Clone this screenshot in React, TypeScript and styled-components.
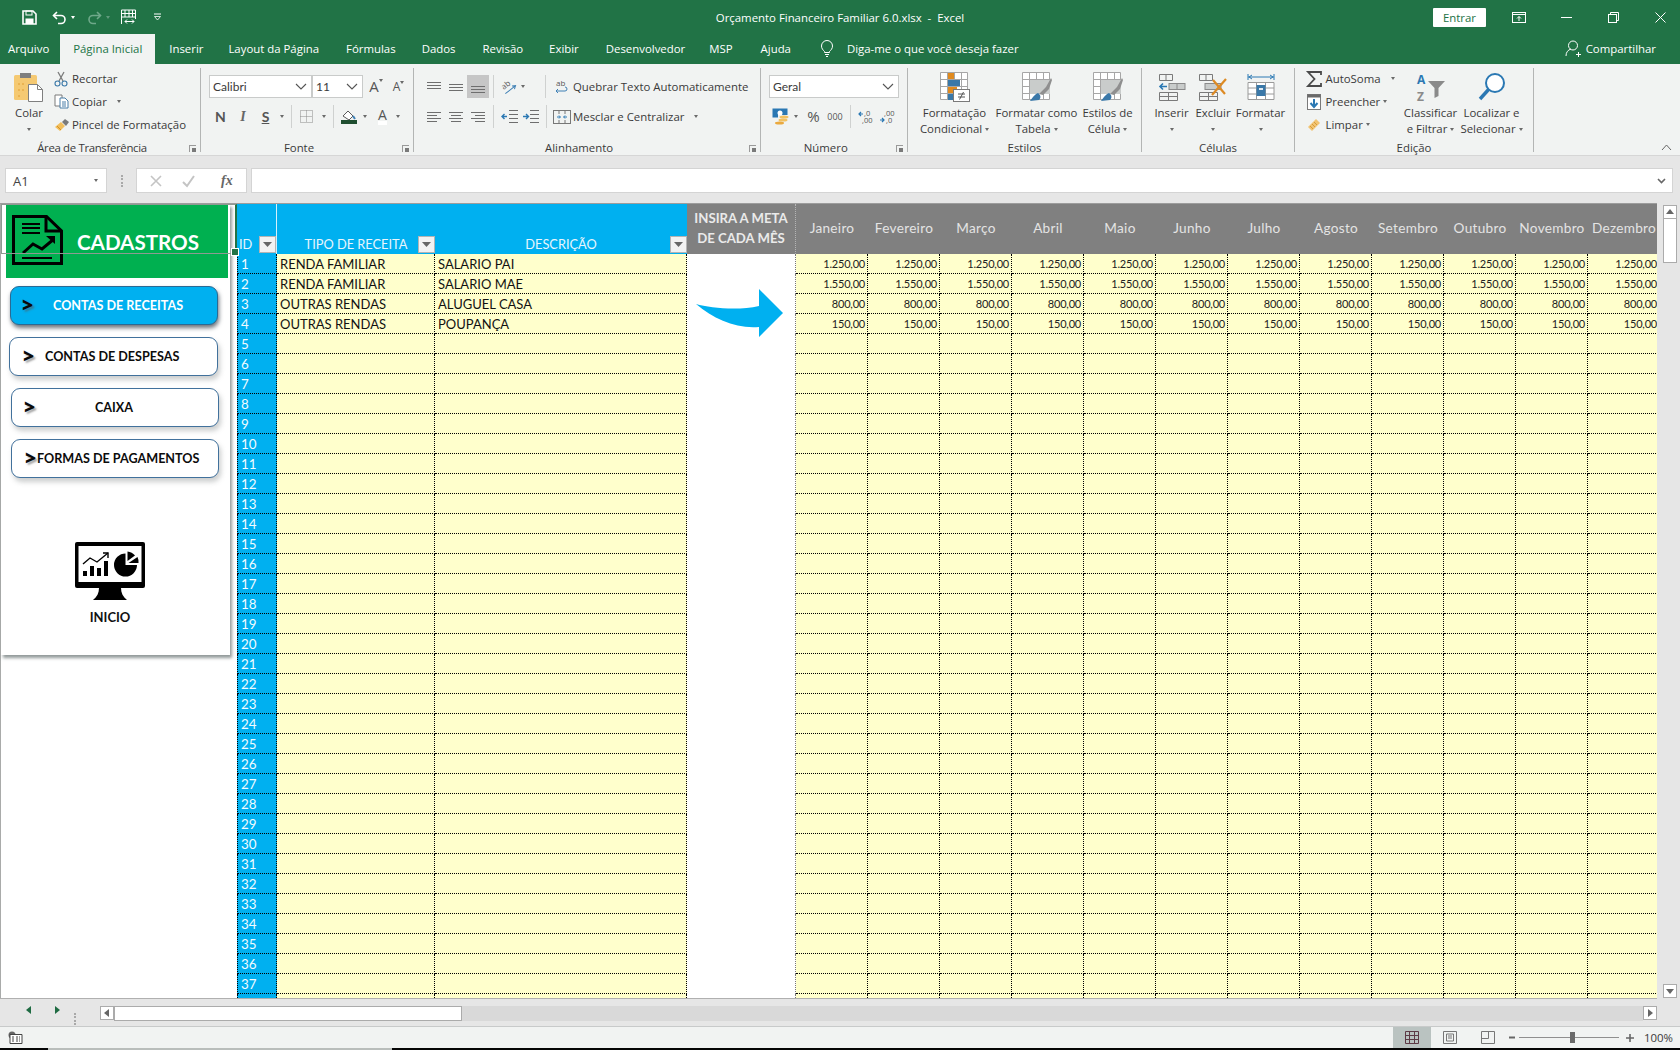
import React from "react";
import styled, { createGlobalStyle } from "styled-components";

const Global = createGlobalStyle`
  html, body { margin: 0; padding: 0; width: 1680px; height: 1050px; overflow: hidden; background: #f1f3f2; }
  #root { width: 1680px; height: 1050px; }
  * { box-sizing: border-box; }
`;

const UI = `"Open Sans", "Noto Sans", sans-serif`;
const CALC = `Lato, "Liberation Sans", sans-serif`;

const Shell = styled.div`
  width: 1680px; height: 1050px; display: flex; flex-direction: column;
  font-family: ${UI}; font-size: 11.4px; color: #3a3a3a;
`;

/* ---------- title bar ---------- */
const TitleBar = styled.header`
  height: 34px; background: #217346; color: #fff;
  display: grid; grid-template-columns: 1fr auto 1fr; align-items: center;
`;
const Qat = styled.div`display: flex; align-items: center;`;
const Slot = styled.span<{ $ml?: number; $w?: number; $sel?: boolean }>`
  display: inline-flex; align-items: center; justify-content: center; flex: none;
  margin-left: ${p => p.$ml ?? 0}px;
  ${p => (p.$w ? `width: ${p.$w}px;` : "")}
  ${p => (p.$sel ? `background: #c6c6c6; height: 23px;` : "")}
`;
const TitleText = styled.div`font-size: 11.4px; letter-spacing: 0; white-space: pre;`;
const WindowBtns = styled.div`display: flex; align-items: center; justify-content: flex-end;`;
const SignIn = styled.button`
  width: 53px; height: 19px; border: 0; border-radius: 1px; background: #fff; color: #217346;
  font: 11.4px ${UI}; padding: 0;
`;

/* ---------- tabs ---------- */
const TabBar = styled.nav`
  height: 30px; background: #217346; color: #fff; display: flex; align-items: stretch; position: relative;
`;
const Tab = styled.div<{ $ml?: number; $active?: boolean; $w?: number }>`
  display: flex; align-items: center; justify-content: center; flex: none; white-space: nowrap; padding-bottom: 2px;
  margin-left: ${p => p.$ml ?? 0}px;
  ${p => (p.$w ? `width: ${p.$w}px;` : "")}
  ${p => (p.$active ? `background: #f1f3f2; color: #217346;` : "")}
`;
const TabSpacer = styled.div`flex: 1;`;

/* ---------- ribbon ---------- */
const Ribbon = styled.section`height: 92px; background: #f1f3f2; display: flex; position: relative; border-bottom: 1px solid #d6d6d6;`;
const Group = styled.div<{ $w: number }>`
  width: ${p => p.$w}px; flex: none; position: relative; display: flex; flex-direction: column;
  &::after { content: ""; position: absolute; right: 0; top: 4px; bottom: 3px; width: 1px; background: #b3b5b4; }
`;
const GroupBody = styled.div`height: 76px; flex: none; display: flex; padding-top: 4px;`;
const GroupLabel = styled.div<{ $launch?: boolean; $tight?: boolean }>`
  height: 15px; line-height: 15px; text-align: center; white-space: nowrap; padding-right: ${p => (p.$launch ? 17 : 0)}px;
  ${p => (p.$tight ? "letter-spacing: -.33px;" : "")}
`;
const Launcher = styled.span`
  position: absolute; right: 5px; bottom: 3px; width: 7px; height: 7px;
  border-left: 1px solid #9a9a9a; border-top: 1px solid #9a9a9a;
  &::after { content: ""; position: absolute; right: 0; bottom: 0; width: 4px; height: 4px; background: #7a7a7a; }
`;
const Big = styled.div<{ $ml?: number; $w: number }>`
  display: flex; flex-direction: column; align-items: center; flex: none;
  margin-left: ${p => p.$ml ?? 0}px; width: ${p => p.$w}px; padding-top: 4px; white-space: nowrap;
`;
const BigIcon = styled.div`height: 30px; display: flex; align-items: center; justify-content: center;`;
const BigLine = styled.div`height: 16px; line-height: 16px; margin-top: 0; display: flex; align-items: center; gap: 3px;`;
const BigFirst = styled(BigLine)`margin-top: 3px;`;
const SmallCol = styled.div<{ $ml?: number; $w: number }>`
  display: flex; flex-direction: column; flex: none; margin: -1px 0 0 ${p => p.$ml ?? 0}px; width: ${p => p.$w}px;
`;
const SmallRow = styled.div`height: 23px; display: flex; align-items: center; white-space: nowrap;`;
const SmallIcon = styled.span<{ $w?: number }>`width: ${p => p.$w ?? 18}px; display: inline-flex; flex: none; align-items: center;`;
const RowStack = styled.div`display: flex; flex-direction: column; gap: 7px; padding-top: 7px;`;
const ToolRow = styled.div`height: 23px; display: flex; align-items: center; white-space: nowrap;`;
const Sep = styled.span<{ $ml: number }>`width: 1px; height: 23px; background: #cfd1d0; margin-left: ${p => p.$ml}px; flex: none;`;
const Caret = styled.span<{ $ml?: number }>`
  display: inline-block; flex: none; width: 0; height: 0; margin-left: ${p => p.$ml ?? 0}px;
  border-left: 2.5px solid transparent; border-right: 2.5px solid transparent; border-top: 3px solid #6a6a6a;
`;
const Combo = styled.div<{ $w: number; $ml?: number; $font?: string }>`
  width: ${p => p.$w}px; height: 23px; margin-left: ${p => p.$ml ?? 0}px; flex: none;
  background: #fff; border: 1px solid #c9cbca; display: flex; align-items: center; justify-content: space-between;
  padding: 0 4px 0 3px; font-family: ${p => p.$font ?? CALC}; font-size: 12px;
`;
const Bold = styled.b`font-family: ${CALC}; font-size: 14px; color: #555;`;
const Ital = styled.i`font-family: "Liberation Serif", serif; font-size: 14px; font-weight: 700; color: #666;`;
const Under = styled.b`font-family: ${CALC}; font-size: 14px; color: #555; text-decoration: underline;`;
const Glyph = styled.span<{ $s: number; $c?: string }>`font-size: ${p => p.$s}px; color: ${p => p.$c ?? "#555"}; line-height: 1;`;
const GrowBox = styled.span`display: inline-flex; align-items: flex-start;`;
const ColorA = styled.span`display: inline-flex; flex-direction: column; align-items: center; font-size: 14px; line-height: 13px; color: #555; border-bottom: 4px solid #fff;`;
const Collapse = styled.svg`position: absolute; right: 8px; bottom: 4px;`;

/* ---------- formula bar ---------- */
const FormulaBar = styled.section`
  height: 47px; background: #e6e6e6; display: flex; align-items: flex-start; padding-top: 12px;
`;
const NameBox = styled.div`
  width: 102px; height: 25px; margin-left: 5px; background: #fff; border: 1px solid #d4d4d4;
  display: flex; align-items: center; justify-content: space-between; padding: 0 8px 0 7px; font-size: 13px; color: #444;
`;
const Grip = styled.span`width: 2px; height: 12px; margin: 7px 12px 0 14px; border-left: 2px dotted #a9a9a9;`;
const FxBox = styled.div`
  width: 111px; height: 25px; margin-left: 1px; background: #fff; border: 1px solid #d4d4d4;
  display: flex; align-items: center; padding-left: 13px; gap: 20px; color: #bcbcbc;
`;
const Fx = styled.i`font-family: "Liberation Serif", serif; font-size: 14px; font-weight: 700; color: #666; margin-left: 6px;`;
const FormulaInput = styled.div`
  width: 1422px; height: 25px; margin-left: 4px; background: #fff; border: 1px solid #d4d4d4;
  display: flex; align-items: center; justify-content: flex-end; padding-right: 6px;
`;

/* ---------- sheet ---------- */
const SheetArea = styled.main`height: 796px; display: flex; background: #e6e6e6;`;
const Sheet = styled.div`
  width: 1657px; flex: none; display: flex; overflow: hidden; position: relative; background: #fff;
  border-top: 1px solid #9c9c9c; border-bottom: 1px solid #b0b0b0;
`;
const LeftCol = styled.aside`
  width: 237px; flex: none; position: relative; border-left: 1px solid #a9abaa; background: #fff;
`;
const Selection = styled.div`
  position: absolute; left: 0; top: 0; width: 236px; height: 50px; pointer-events: none;
  border-right: 2px solid #217346; border-bottom: 1px solid #8e9a92; border-left: 1px solid #8e9a92; border-top: 1px solid #8e9a92; z-index: 3;
  &::after { content: ""; position: absolute; right: -4px; bottom: -3px; width: 6px; height: 6px; background: #217346; border: 1px solid #fff; }
`;
const Panel = styled.div`
  width: 229px; height: 451px; background: #fff; box-shadow: 2px 3px 3px rgba(110,120,120,.75);
  display: flex; flex-direction: column;
`;
const PanelHead = styled.div`
  height: 74px; margin: 0 2px 0 5px; background: #00b050; display: flex; align-items: flex-start; padding: 11px 0 0 6px; position: relative;
`;
const PanelTitle = styled.div`
  font-family: ${CALC}; font-weight: 700; color: #fff; font-size: 20.6px; line-height: 30px; margin: 12px 0 0 14px;
`;
const NavList = styled.div`display: flex; flex-direction: column; gap: 12px; padding-top: 8px;`;
const NavButton = styled.div<{ $x: number; $w: number; $active?: boolean }>`
  width: ${p => p.$w}px; height: 39px; margin-left: ${p => p.$x}px; border-radius: 9px;
  border: 1px solid ${p => (p.$active ? "#2a6a94" : "#41719c")};
  background: ${p => (p.$active ? "#00b0f0" : "#fff")};
  color: ${p => (p.$active ? "#fff" : "#0c0c0c")};
  box-shadow: ${p => (p.$active ? "1px 3px 4px rgba(60,70,80,.75)" : "2px 4px 5px rgba(130,135,135,.4)")};
  display: flex; align-items: center; font-family: ${CALC}; font-weight: 700; font-size: 12.6px; white-space: nowrap;
`;
const Chevron = styled.span<{ $x: number }>`
  margin-left: ${p => p.$x}px; width: 11px; flex: none; color: #0a0a0a; font-family: ${UI}; font-weight: 800; font-size: 19px; line-height: 1;
  text-shadow: 2px 2px 2px rgba(90,90,90,.55);
`;
const NavLabel = styled.span<{ $x: number }>`margin-left: ${p => p.$x}px;`;
const Home = styled.div`display: flex; flex-direction: column; align-items: center; width: 218px; margin-top: 64px;`;
const HomeLabel = styled.div`font-family: ${CALC}; font-weight: 700; font-size: 13px; color: #111; margin-top: 9px; line-height: 16px;`;

const Grid = styled.div`flex: none; width: 1420px; overflow: hidden; position: relative;`;
const COLS = "40px 158px 252px 109px repeat(12, 72px)";
const HeadRow = styled.div`height: 50px; display: grid; grid-template-columns: ${COLS}; font-family: ${CALC}; font-size: 12.8px;`;
const BlueHead = styled.div<{ $line?: boolean; $center?: boolean }>`
  background: #00b0f0; color: #e9f6fd; position: relative; display: flex; align-items: flex-end;
  justify-content: ${p => (p.$center ? "center" : "flex-start")}; padding: 0 0 1px ${p => (p.$center ? 0 : 2)}px; line-height: 18px;
  ${p => (p.$line ? "border-right: 1px solid #d5f0fc;" : "")}
`;
const FilterBtn = styled.span`
  position: absolute; right: 0; bottom: 1px; width: 17px; height: 17px; background: #f2f2f2; border: 1px solid #b4b4b4;
  display: flex; align-items: center; justify-content: center;
`;
const GoalHead = styled.div`
  background: #808080; color: #eaeaea; font-weight: 700; font-size: 13.2px; line-height: 20px; text-align: center; padding-top: 4px; white-space: nowrap;
  border-right: 1px dotted #b5b5b5;
`;
const MonthHead = styled.div`
  background: #808080; color: #e4e4e4; font-size: 13.6px; letter-spacing: .3px; display: flex; align-items: center; justify-content: center; padding-bottom: 2px; white-space: nowrap;
`;
const Row = styled.div`height: 20px; display: grid; grid-template-columns: ${COLS}; grid-template-rows: 20px; font-family: ${CALC};`;
const IdCell = styled.div`
  height: 20px; background: #00b0f0; color: #f2fbff; font-size: 13.4px; line-height: 20px; padding-left: 3px;
  border-left: 1px dotted #000; border-right: 1px dotted #000; border-bottom: 1px dotted #000;
`;
const TextCell = styled.div`
  height: 20px; background: #ffffcc; color: #111; font-size: 13px; line-height: 20px; padding-left: 3px; white-space: nowrap;
  border-right: 1px dotted #000; border-bottom: 1px dotted #000;
`;
const GoalCell = styled.div`height: 20px; background: #fff; border-right: 1px dotted #777;`;
const ValueCell = styled.div`
  height: 20px; background: #ffffcc; color: #222; font-size: 11px; letter-spacing: -.2px; line-height: 20px; text-align: right; padding-right: 2px; white-space: nowrap;
  border-right: 1px dotted #000; border-bottom: 1px dotted #000;
`;
const GoalArrow = styled.svg`position: absolute; left: 459px; top: 85px; z-index: 2;`;

const VScroll = styled.div`
  width: 23px; flex: none; display: flex; flex-direction: column; align-items: center; padding: 2px 0 1px 2px;
`;
const ScrollBtn = styled.div`
  width: 14px; height: 14px; background: #fff; border: 1px solid #ababab; flex: none; display: flex; align-items: center; justify-content: center;
`;
const VThumb = styled.div`width: 14px; height: 44px; background: #fff; border: 1px solid #ababab; border-top: 0; flex: none;`;
const VTrack = styled.div`flex: 1;`;

const HBar = styled.section`height: 28px; background: #e6e6e6; display: flex; align-items: flex-start; padding: 7px 23px 0 0; border-bottom: 1px solid #c8caca;`;
const HTrack = styled.div`flex: 1; height: 15px; background: #d9d9d9; display: flex;`;
const HThumb = styled.div`width: 348px; height: 15px; background: #fff; border: 1px solid #ababab;`;
const StatusBar = styled.footer`height: 21px; background: #f1f3f2; display: flex; align-items: stretch;`;
const Mode = styled.div<{ $on?: boolean; $w: number; $ml?: number }>`
  width: ${p => p.$w}px; margin-left: ${p => p.$ml ?? 0}px; flex: none; display: flex; align-items: center; justify-content: center;
  ${p => (p.$on ? "background: #bac3c1;" : "")}
`;
const Zoom = styled.div`width: 100px; height: 1px; background: #8f8f8f; align-self: center; margin-left: 4px; position: relative; flex: none;`;
const ZoomThumb = styled.span`position: absolute; left: 51px; top: -5px; width: 5px; height: 11px; background: #6a6a6a;`;
const Taskbar = styled.div`height: 2px; background: #050505; display: flex;`;
const TaskItem = styled.div`width: 344px; margin-left: 48px; background: #b9bdbb;`;

/* ---------- icons ---------- */
const S = ({ w, h, children }: { w: number; h: number; children: React.ReactNode }) => (
  <svg width={w} height={h} viewBox={`0 0 ${w} ${h}`} fill="none" overflow="visible">{children}</svg>
);
const Tiny = styled.text`font-family: ${UI};`;

const SaveI = () => <S w={15} h={15}><path d="M1 1h10l3 3v10H1z" stroke="#fff" strokeWidth="1.6"/><rect x="4" y="1" width="6" height="4" stroke="#fff"/><rect x="3.5" y="8.5" width="8" height="5.5" fill="#fff"/></S>;
const UndoI = ({ c = "#fff" }: { c?: string }) => <S w={15} h={15}><path d="M5 2 1.5 5.5 5 9" stroke={c} strokeWidth="1.6"/><path d="M2 5.5h7a4 4 0 0 1 0 8H6" stroke={c} strokeWidth="1.6"/></S>;
const RedoI = () => <S w={15} h={15}><g transform="translate(15 0) scale(-1 1)"><path d="M5 2 1.5 5.5 5 9" stroke="#6fa98a" strokeWidth="1.6"/><path d="M2 5.5h7a4 4 0 0 1 0 8H6" stroke="#6fa98a" strokeWidth="1.6"/></g></S>;
const QatCaret = styled(Caret)<{ $dim?: boolean }>`border-top-color: ${p => (p.$dim ? "#5f9a7b" : "#fff")};`;
const FormI = () => <S w={17} h={16}><path d="M1.5 1h14v9M1.5 1v14M1.5 4.5h14M1.5 8h14M5 1v7M9 1v7M12.5 1v7" stroke="#fff"/><path d="M5 12.5h9M7 10.5l-2 2 2 2M12 10.5l2 2-2 2" stroke="#fff"/></S>;
const CustomI = () => <S w={9} h={8}><path d="M1 1h7" stroke="#fff"/><path d="M1.5 3.5h6L4.5 7z" stroke="#fff" strokeWidth=".8"/></S>;
const RibbonOpt = () => <S w={14} h={11}><rect x=".5" y=".5" width="13" height="10" stroke="#fff"/><path d="M1 2.5h12" stroke="#fff"/><path d="M7 9V4.5M5 6.5l2-2 2 2" stroke="#fff"/></S>;
const MinI = () => <S w={11} h={11}><path d="M0 5.5h11" stroke="#fff"/></S>;
const RestoreI = () => <S w={11} h={11}><rect x=".5" y="2.5" width="8" height="8" stroke="#fff"/><path d="M2.5 2.5v-2h8v8h-2" stroke="#fff"/></S>;
const CloseI = () => <S w={11} h={11}><path d="M.5.5l10 10M10.5.5l-10 10" stroke="#fff"/></S>;
const BulbI = () => <S w={14} h={17}><path d="M4.5 11.5C3 10 1.5 8.5 1.5 6a5.5 5.5 0 0 1 11 0c0 2.5-1.5 4-3 5.5v1h-5z" stroke="#fff"/><path d="M5 14.5h4M6 16.5h2" stroke="#fff"/></S>;
const ShareI = () => <S w={17} h={17}><circle cx="8" cy="5.5" r="4.5" stroke="#fff"/><path d="M1 16c0-4 2-6 5-7M11 14.5h5M13.5 12v5" stroke="#fff"/></S>;

const PasteI = () => <S w={30} h={30}><rect x="0" y="3" width="23" height="25" rx="1.5" fill="#f5c972"/><rect x="6" y="1" width="11" height="5" fill="#7f7f7f"/><path d="M4 12h2M8 12h2M4 18h2M8 18h2M4 24h2" stroke="#e09e32"/><path d="M14.5 12.5h9l5 5v12h-14z" fill="#fff" stroke="#7f7f7f"/><path d="M23.5 12.5v5h5" stroke="#7f7f7f"/></S>;
const ScissorsI = () => <S w={14} h={16}><path d="M4 1l5 9M10 1L5 10" stroke="#7c7c7c" strokeWidth="1.3"/><circle cx="3.5" cy="12.5" r="2.5" stroke="#3a78a8" strokeWidth="1.1"/><circle cx="10.5" cy="12.5" r="2.5" stroke="#3a78a8" strokeWidth="1.1"/></S>;
const CopyI = () => <S w={15} h={15}><path d="M1 1h7v11H1z" fill="#fff" stroke="#7a7a7a"/><path d="M6 4h5l3 3v7H6z" fill="#fff" stroke="#4a7ea8"/><path d="M8 8h4M8 10h4M8 12h4" stroke="#4a7ea8"/></S>;
const BrushI = () => <S w={16} h={14}><path d="M1 9l6-5 4 4-5 5z" fill="#f1be5c"/><path d="M3 8l4 4" stroke="#d78f22"/><path d="M8 4l3-3 4 3-3 4z" fill="#7a7a7a"/></S>;
const ChevronDown = () => <S w={12} h={8}><path d="M1 1l5 5 5-5" stroke="#555" strokeWidth="1.1"/></S>;
const BorderI = () => <S w={13} h={13}><path d="M.5.5h12v12H.5zM6.5.5v12M.5 6.5h12" stroke="#8a8a8a" strokeDasharray="1 1"/></S>;
const FillI = () => <S w={16} h={15}><path d="M2 7l5-5 5 5-4 4z" fill="#fff" stroke="#5a5a5a"/><path d="M12 7l2 3" stroke="#3f80b5" strokeWidth="2"/><rect y="11" width="16" height="4" fill="#1f4e30"/></S>;
const Lines = ({ rows }: { rows: [number, number, number][] }) => <S w={14} h={14}>{rows.map(([a, b, y], i) => <path key={i} d={`M${a} ${y + .5}H${b}`} stroke="#6e6e6e"/>)}</S>;
const OrientI = () => <S w={16} h={16}><g transform="rotate(-38 8 8)"><Tiny x="2" y="7" fontSize="8" fill="#555">ab</Tiny><path d="M1 11h13M11 9l3 2-3 2" stroke="#3f80b5"/></g></S>;
const IndentI = ({ flip }: { flip?: boolean }) => <S w={17} h={13}><path d="M17 .5H8M17 4.5H8M17 8.5H8M17 12.5H8" stroke="#6e6e6e"/><path d={flip ? "M6 6.5H1M3.5 4 1 6.5 3.5 9" : "M1 6.5h5M4 4l2.5 2.5L4 9"} stroke="#2b78b3" strokeWidth="1.4"/></S>;
const WrapI = () => <S w={16} h={15}><Tiny x="3" y="7" fontSize="8" fill="#555">ab</Tiny><path d="M3 12h9a2 2 0 0 0 0-4" stroke="#3f80b5"/><path d="M5 10l-2 2 2 2" stroke="#3f80b5"/></S>;
const MergeI = () => <S w={18} h={14}><rect x=".5" y=".5" width="17" height="13" stroke="#777"/><path d="M6 .5v13M12 .5v13" stroke="#777"/><rect x="3" y="4" width="12" height="6" fill="#f1f3f2"/><path d="M4 7h3M14 7h-3M6 5.5 7.5 7 6 8.5M12 5.5 10.5 7 12 8.5" stroke="#2b78b3"/></S>;
const CurrencyI = () => <S w={17} h={17}><rect x=".5" y=".5" width="15" height="9" fill="#2b78b3"/><circle cx="8" cy="5" r="2.5" fill="#fff"/><rect x="6" y="7" width="10" height="3" fill="#f1f3f2"/><ellipse cx="12" cy="9" rx="4.5" ry="1.5" fill="#f1c162"/><ellipse cx="11" cy="12" rx="4.5" ry="1.5" fill="#f1c162"/><ellipse cx="7.5" cy="15" rx="4.5" ry="1.5" fill="#eaa93f"/></S>;
const DecI = ({ a, b }: { a: string; b: string }) => <S w={15} h={15}><Tiny x="5" y="6.5" fontSize="7.5" fill="#555">{a}</Tiny><Tiny x="3" y="14" fontSize="7.5" fill="#555">{b}</Tiny><path d="M0 5h4M2 3 0 5l2 2" stroke="#2b78b3" strokeWidth="1.2"/></S>;
const MoreDec = () => <S w={15} h={15}><Tiny x="4" y="6.5" fontSize="7.5" fill="#555">,00</Tiny><Tiny x="6" y="14" fontSize="7.5" fill="#555">,0</Tiny><path d="M0 11h4M2 9l2 2-2 2" stroke="#2b78b3" strokeWidth="1.2"/></S>;

const SheetGrid = () => <path d="M.5.5h27v27H.5zM.5 7.5h27M.5 14.5h27M.5 21.5h27M7.5.5v27M14.5.5v27M21.5.5v27" stroke="#a6a6a6" fill="#fff"/>;
const CondI = () => <S w={30} h={30}><SheetGrid/><rect x="8" y="1" width="6" height="6" fill="#e08a1e"/><rect x="8" y="8" width="12" height="6" fill="#3a78a8"/><rect x="8" y="15" width="9" height="6" fill="#e08a1e"/><rect x="8" y="22" width="5" height="6" fill="#3a78a8"/><rect x="13.5" y="17.5" width="16" height="12" fill="#fff" stroke="#7a7a7a"/><path d="M18 22h7M18 25h7M23.5 20l-4 7.5" stroke="#555"/></S>;
const TableI = () => <S w={30} h={30}><SheetGrid/><rect x="8" y="8" width="20" height="14" fill="#c9cccb"/><path d="M17 22l7-7 5-9 1 2-3 9-6 6z" fill="#8f8f8f"/><path d="M16 21c3 2 3 5 1 7l-9 1c2-3 5-7 8-8z" fill="#3a78a8"/></S>;
const InsI = () => <S w={28} h={30}><path d="M1.5 2.5h13v6h-13zM8 2.5v6M1.5 20.5h18v8h-18zM1.5 24.5h18M10.5 20.5v8" stroke="#7a7a7a"/><rect x="11" y="11.5" width="16" height="6" fill="#c9cccb" stroke="#8a8a8a"/><path d="M19 11.5v6" stroke="#8a8a8a"/><path d="M2 14.5h7M5 11.5l-3 3 3 3" stroke="#2b78b3" strokeWidth="1.6"/></S>;
const DelI = () => <S w={30} h={30}><path d="M1.5 2.5h13v6h-13zM8 2.5v6M1.5 20.5h18v8h-18zM1.5 24.5h18M10.5 20.5v8" stroke="#7a7a7a"/><rect x="7" y="11.5" width="16" height="6" fill="#c9cccb" stroke="#8a8a8a"/><path d="M15 8l12 14M28 7 14 23" stroke="#dd8a24" strokeWidth="2.2"/></S>;
const FmtI = () => <S w={28} h={30}><path d="M1 5h26" stroke="#2b78b3"/><path d="M1 2v6M27 2v6M5 3 2 5l3 2M23 3l3 2-3 2" stroke="#2b78b3"/><path d="M1 10.5h26v17H1zM1 16h26M1 22h26M9.5 10.5v17M18.5 10.5v17" stroke="#9a9a9a" fill="#fff"/><rect x="9.5" y="13" width="9" height="11" fill="#3a78a8"/><path d="M12 17h4" stroke="#dfe9f1" strokeWidth="2"/></S>;
const SigmaI = () => <S w={15} h={16}><path d="M14 4V1H1l6.5 7L1 15h13v-3" stroke="#4a4a4a" strokeWidth="1.8"/></S>;
const FillDownI = () => <S w={14} h={16}><rect x=".5" y=".5" width="13" height="15" fill="#fff" stroke="#7a7a7a"/><rect x=".5" y=".5" width="13" height="3" fill="#6a6a6a"/><path d="M7 5v8M3.5 9 7 13l3.5-4" stroke="#2b78b3" strokeWidth="2"/></S>;
const EraserI = () => <S w={14} h={14}><path d="M1 9l8-8 4 4-8 8z" fill="#f1c473"/><path d="M3 8l3 3M5 6l3 3M7 4l3 3" stroke="#d79a3a"/></S>;
const SortI = () => <S w={30} h={30}><Tiny x="1" y="12" fontSize="12" fontWeight="700" fill="#2b78b3">A</Tiny><Tiny x="1" y="29" fontSize="12" fontWeight="700" fill="#8a8a8a">Z</Tiny><path d="M12 9h17l-6.5 7v8l-4 2V16z" fill="#8a8a8a"/></S>;
const FindI = () => <S w={28} h={30}><circle cx="17" cy="11" r="9" stroke="#2b78b3" strokeWidth="2" fill="#fff"/><path d="M2 27l9-10" stroke="#2b78b3" strokeWidth="3.4"/></S>;

const DocI = () => <S w={51} h={50}><path d="M1.5 1.5h33L49.5 16v32.5h-48z" fill="#00b050" stroke="#000" strokeWidth="3"/><path d="M34 2v14h15" stroke="#000" strokeWidth="3"/><path d="M10 9h18M10 13h18M10 18h18" stroke="#000" strokeWidth="2"/><path d="M11 38l10-9 9 5 12-10" stroke="#000" strokeWidth="3"/><path d="M34 21h9v8z" fill="#000"/><path d="M10 43h30" stroke="#000" strokeWidth="2"/></S>;
const MonitorI = () => <S w={70} h={58}><rect width="70" height="46" rx="2" fill="#000"/><rect x="3.5" y="4" width="63" height="36" fill="#fff"/><path d="M24 46h22c0 5 2 9 6 12H18c4-3 6-7 6-12z" fill="#000"/><rect x="8" y="29" width="4" height="5" fill="#000"/><rect x="15" y="24" width="4" height="10" fill="#000"/><rect x="22" y="26" width="4" height="8" fill="#000"/><rect x="29" y="19" width="4" height="15" fill="#000"/><path d="M8 22l7-6 7 4 11-9" stroke="#000" strokeWidth="1.4"/><path d="M28 11h5v5" stroke="#000" strokeWidth="1.4"/><path d="M50.5 11.5a11.5 11.5 0 1 0 11.5 11.5H50.5z" fill="#000"/><path d="M52.5 9.5a11 11 0 0 1 7.5 4L52.5 19z" fill="#000"/><path d="M53.5 21l9-6a11 11 0 0 1 1 6z" fill="#000"/></S>;
const FilterCaret = () => <S w={9} h={6}><path d="M0 0h9L4.5 5z" fill="#666"/></S>;
const ArrowUp = ({ rot = 0 }: { rot?: number }) => <S w={8} h={6}><path d="M4 0l4 5H0z" fill="#666" transform={`rotate(${rot} 4 3)`}/></S>;
const NavArrow = ({ left }: { left?: boolean }) => <S w={5} h={8}><path d={left ? "M5 0v8L0 4z" : "M0 0v8l5-4z"} fill="#1f6b42"/></S>;
const MacroI = () => <S w={14} h={13}><circle cx="4" cy="4" r="3.5" fill="#666"/><path d="M2 3.5h12v9H2z" fill="#fff" stroke="#444"/><path d="M4 6h2M8 6h2M4 8h2M8 8h2M4 10h2M8 10h2M11 6h1M11 8h1M11 10h1" stroke="#444"/></S>;
const NormalI = () => <S w={14} h={13}><path d="M.5.5h13v12H.5zM.5 4.5h13M.5 8.5h13M4.5.5v12M9.5.5v12" stroke="#5d3a46"/></S>;
const PageI = () => <S w={14} h={13}><path d="M.5.5h13v12H.5z" stroke="#777"/><path d="M3.5 3h7v7h-7zM5 5h4M5 7h4" stroke="#777"/></S>;
const BreakI = () => <S w={14} h={13}><path d="M.5.5h13v12H.5zM.5 7.5h7M7.5.5v7" stroke="#777"/></S>;
const CollapseGlyph = () => <path d="M1 6l4.5-5L10 6" stroke="#666"/>;

const ArrowShape = () => <path d="M0 15C14 19 42 22 63 17V0l24 24-24 24V38C40 40 18 30 0 15z" fill="#00b0f0"/>;

/* ---------- data ---------- */
const months = ["Janeiro", "Fevereiro", "Março", "Abril", "Maio", "Junho", "Julho", "Agosto", "Setembro", "Outubro", "Novembro", "Dezembro"];
const rows = [
  ["RENDA FAMILIAR", "SALARIO PAI", "1.250,00"],
  ["RENDA FAMILIAR", "SALARIO MAE", "1.550,00"],
  ["OUTRAS RENDAS", "ALUGUEL CASA", "800,00"],
  ["OUTRAS RENDAS", "POUPANÇA", "150,00"],
];
const tabs: [string, number][] = [["Inserir", 14], ["Layout da Página", 25], ["Fórmulas", 27], ["Dados", 26], ["Revisão", 27], ["Exibir", 26], ["Desenvolvedor", 27], ["MSP", 24], ["Ajuda", 28]];
const nav = [
  { t: "CONTAS DE RECEITAS", x: 9, w: 208, cx: 11, lx: 20, active: true },
  { t: "CONTAS DE DESPESAS", x: 8, w: 209, cx: 13, lx: 11 },
  { t: "CAIXA", x: 10, w: 208, cx: 12, lx: 60 },
  { t: "FORMAS DE PAGAMENTOS", x: 10, w: 208, cx: 13, lx: 1 },
];

export default function App() {
  return (
    <Shell>
      <Global />
      <TitleBar>
        <Qat>
          <Slot $ml={22}><SaveI /></Slot>
          <Slot $ml={15}><UndoI /></Slot>
          <QatCaret $ml={4} />
          <Slot $ml={12}><RedoI /></Slot>
          <QatCaret $ml={4} $dim />
          <Slot $ml={10}><FormI /></Slot>
          <Slot $ml={16}><CustomI /></Slot>
        </Qat>
        <TitleText>Orçamento Financeiro Familiar 6.0.xlsx  -  Excel</TitleText>
        <WindowBtns>
          <SignIn>Entrar</SignIn>
          <Slot $ml={26}><RibbonOpt /></Slot>
          <Slot $ml={35}><MinI /></Slot>
          <Slot $ml={36}><RestoreI /></Slot>
          <Slot $ml={36}><CloseI /></Slot>
          <Slot $w={14} />
        </WindowBtns>
      </TitleBar>

      <TabBar>
        <Tab $ml={8}>Arquivo</Tab>
        <Tab $ml={11} $w={95} $active>Página Inicial</Tab>
        {tabs.map(([t, ml]) => <Tab key={t} $ml={ml}>{t}</Tab>)}
        <Tab $ml={29}><BulbI /></Tab>
        <Tab $ml={13}>Diga-me o que você deseja fazer</Tab>
        <TabSpacer />
        <Tab><ShareI /></Tab>
        <Tab $ml={4}>Compartilhar</Tab>
        <Slot $w={24} />
      </TabBar>

      <Ribbon>
        <Group $w={201}>
          <GroupBody>
            <Big $ml={14} $w={30}>
              <BigIcon><PasteI /></BigIcon>
              <BigFirst>Colar</BigFirst>
              <BigLine><Caret /></BigLine>
            </Big>
            <SmallCol $ml={10} $w={140}>
              <SmallRow><SmallIcon><ScissorsI /></SmallIcon>Recortar</SmallRow>
              <SmallRow><SmallIcon><CopyI /></SmallIcon>Copiar<Caret $ml={10} /></SmallRow>
              <SmallRow><SmallIcon><BrushI /></SmallIcon>Pincel de Formatação</SmallRow>
            </SmallCol>
          </GroupBody>
          <GroupLabel $launch $tight>Área de Transferência</GroupLabel>
          <Launcher />
        </Group>

        <Group $w={213}>
          <GroupBody>
            <RowStack>
              <ToolRow>
                <Combo $w={103} $ml={8}>Calibri<ChevronDown /></Combo>
                <Combo $w={51}>11<ChevronDown /></Combo>
                <Slot $ml={6} $w={14}><GrowBox><Glyph $s={15}>A</Glyph><Caret /></GrowBox></Slot>
                <Slot $ml={9} $w={13}><GrowBox><Glyph $s={12}>A</Glyph><Caret /></GrowBox></Slot>
              </ToolRow>
              <ToolRow>
                <Slot $ml={15} $w={9}><Bold>N</Bold></Slot>
                <Slot $ml={15} $w={6}><Ital>I</Ital></Slot>
                <Slot $ml={16} $w={7}><Under>S</Under></Slot>
                <Caret $ml={11} />
                <Sep $ml={7} />
                <Slot $ml={8} $w={13}><BorderI /></Slot>
                <Caret $ml={9} />
                <Sep $ml={7} />
                <Slot $ml={7} $w={16}><FillI /></Slot>
                <Caret $ml={6} />
                <Slot $ml={11} $w={9}><ColorA>A</ColorA></Slot>
                <Caret $ml={9} />
              </ToolRow>
            </RowStack>
          </GroupBody>
          <GroupLabel $launch>Fonte</GroupLabel>
          <Launcher />
        </Group>

        <Group $w={347}>
          <GroupBody>
            <RowStack>
              <ToolRow>
                <Slot $ml={13} $w={14}><Lines rows={[[0, 14, 2], [0, 14, 5], [0, 14, 8]]} /></Slot>
                <Slot $ml={8} $w={14}><Lines rows={[[0, 14, 4], [0, 14, 7], [0, 14, 10]]} /></Slot>
                <Slot $ml={4} $w={22} $sel><Lines rows={[[0, 14, 6], [0, 14, 9], [0, 14, 12]]} /></Slot>
                <Sep $ml={4} />
                <Slot $ml={7} $w={15}><OrientI /></Slot>
                <Caret $ml={5} />
                <Sep $ml={20} />
                <Slot $ml={6} $w={18}><WrapI /></Slot>
                <Slot $ml={3}>Quebrar Texto Automaticamente</Slot>
              </ToolRow>
              <ToolRow>
                <Slot $ml={13} $w={14}><Lines rows={[[0, 14, 2], [0, 10, 5], [0, 14, 8], [0, 10, 11]]} /></Slot>
                <Slot $ml={8} $w={14}><Lines rows={[[0, 14, 2], [2, 12, 5], [0, 14, 8], [2, 12, 11]]} /></Slot>
                <Slot $ml={8} $w={14}><Lines rows={[[0, 14, 2], [4, 14, 5], [0, 14, 8], [4, 14, 11]]} /></Slot>
                <Sep $ml={8} />
                <Slot $ml={7} $w={16}><IndentI flip /></Slot>
                <Slot $ml={5} $w={17}><IndentI /></Slot>
                <Sep $ml={7} />
                <Slot $ml={6} $w={18}><MergeI /></Slot>
                <Slot $ml={2}>Mesclar e Centralizar</Slot>
                <Caret $ml={10} />
              </ToolRow>
            </RowStack>
          </GroupBody>
          <GroupLabel $launch>Alinhamento</GroupLabel>
          <Launcher />
        </Group>

        <Group $w={146.5}>
          <GroupBody>
            <RowStack>
              <ToolRow><Combo $w={130} $ml={8}>Geral<ChevronDown /></Combo></ToolRow>
              <ToolRow>
                <Slot $ml={11} $w={16}><CurrencyI /></Slot>
                <Caret $ml={6} />
                <Slot $ml={9} $w={13}><Glyph $s={15}>%</Glyph></Slot>
                <Slot $ml={8} $w={14}><Glyph $s={9}>000</Glyph></Slot>
                <Sep $ml={8} />
                <Slot $ml={8} $w={14}><DecI a=",0" b=",00" /></Slot>
                <Slot $ml={7} $w={15}><MoreDec /></Slot>
              </ToolRow>
            </RowStack>
          </GroupBody>
          <GroupLabel $launch>Número</GroupLabel>
          <Launcher />
        </Group>

        <Group $w={234}>
          <GroupBody>
            <Big $ml={7} $w={80}><BigIcon><CondI /></BigIcon><BigFirst>Formatação</BigFirst><BigLine>Condicional<Caret /></BigLine></Big>
            <Big $w={84}><BigIcon><TableI /></BigIcon><BigFirst>Formatar como</BigFirst><BigLine>Tabela<Caret /></BigLine></Big>
            <Big $w={58}><BigIcon><TableI /></BigIcon><BigFirst>Estilos de</BigFirst><BigLine>Célula<Caret /></BigLine></Big>
          </GroupBody>
          <GroupLabel>Estilos</GroupLabel>
        </Group>

        <Group $w={153}>
          <GroupBody>
            <Big $ml={10} $w={40}><BigIcon><InsI /></BigIcon><BigFirst>Inserir</BigFirst><BigLine><Caret /></BigLine></Big>
            <Big $w={43}><BigIcon><DelI /></BigIcon><BigFirst>Excluir</BigFirst><BigLine><Caret /></BigLine></Big>
            <Big $w={52}><BigIcon><FmtI /></BigIcon><BigFirst>Formatar</BigFirst><BigLine><Caret /></BigLine></Big>
          </GroupBody>
          <GroupLabel>Células</GroupLabel>
        </Group>

        <Group $w={239}>
          <GroupBody>
            <SmallCol $ml={12} $w={94}>
              <SmallRow><SmallIcon $w={19}><SigmaI /></SmallIcon>AutoSoma<Caret $ml={10} /></SmallRow>
              <SmallRow><SmallIcon $w={19}><FillDownI /></SmallIcon>Preencher<Caret $ml={3} /></SmallRow>
              <SmallRow><SmallIcon $w={19}><EraserI /></SmallIcon>Limpar<Caret $ml={3} /></SmallRow>
            </SmallCol>
            <Big $w={60}><BigIcon><SortI /></BigIcon><BigFirst>Classificar</BigFirst><BigLine>e Filtrar<Caret /></BigLine></Big>
            <Big $w={62}><BigIcon><FindI /></BigIcon><BigFirst>Localizar e</BigFirst><BigLine>Selecionar<Caret /></BigLine></Big>
          </GroupBody>
          <GroupLabel>Edição</GroupLabel>
        </Group>
        <Collapse width="11" height="7" fill="none"><CollapseGlyph /></Collapse>
      </Ribbon>

      <FormulaBar>
        <NameBox>A1<Caret /></NameBox>
        <Grip />
        <FxBox>
          <S w={12} h={12}><path d="M1 1l10 10M11 1L1 11" stroke="#c4c4c4" strokeWidth="1.6"/></S>
          <S w={13} h={12}><path d="M1 7l4 4 7-10" stroke="#c4c4c4" strokeWidth="2"/></S>
          <Fx>fx</Fx>
        </FxBox>
        <FormulaInput><S w={9} h={6}><path d="M1 1l3.5 3.5L8 1" stroke="#666" strokeWidth="1.6"/></S></FormulaInput>
      </FormulaBar>

      <SheetArea>
        <Sheet>
          <LeftCol>
            <Selection />
            <Panel>
              <PanelHead>
                <DocI />
                <PanelTitle>CADASTROS</PanelTitle>
              </PanelHead>
              <NavList>
                {nav.map(n => (
                  <NavButton key={n.t} $x={n.x} $w={n.w} $active={n.active}>
                    <Chevron $x={n.cx}>&gt;</Chevron>
                    <NavLabel $x={n.lx}>{n.t}</NavLabel>
                  </NavButton>
                ))}
              </NavList>
              <Home>
                <MonitorI />
                <HomeLabel>INICIO</HomeLabel>
              </Home>
            </Panel>
          </LeftCol>
          <Grid>
            <HeadRow>
              <BlueHead $line>ID<FilterBtn><FilterCaret /></FilterBtn></BlueHead>
              <BlueHead $center>TIPO DE RECEITA<FilterBtn><FilterCaret /></FilterBtn></BlueHead>
              <BlueHead $center>DESCRIÇÃO<FilterBtn><FilterCaret /></FilterBtn></BlueHead>
              <GoalHead>INSIRA A META<br />DE CADA MÊS</GoalHead>
              {months.map(m => <MonthHead key={m}>{m}</MonthHead>)}
            </HeadRow>
            {Array.from({ length: 38 }, (_, i) => (
              <Row key={i}>
                <IdCell>{i < 37 ? i + 1 : ""}</IdCell>
                <TextCell>{rows[i]?.[0]}</TextCell>
                <TextCell>{rows[i]?.[1]}</TextCell>
                <GoalCell />
                {months.map(m => <ValueCell key={m}>{rows[i]?.[2]}</ValueCell>)}
              </Row>
            ))}
            <GoalArrow width="87" height="48" viewBox="0 0 87 48"><ArrowShape /></GoalArrow>
          </Grid>
        </Sheet>
        <VScroll>
          <ScrollBtn><ArrowUp /></ScrollBtn>
          <VThumb />
          <VTrack />
          <ScrollBtn><ArrowUp rot={180} /></ScrollBtn>
        </VScroll>
      </SheetArea>

      <HBar>
        <Slot $ml={26} $w={5}><NavArrow left /></Slot>
        <Slot $ml={24} $w={5}><NavArrow /></Slot>
        <Grip />
        <Slot $ml={12}><ScrollBtn><ArrowUp rot={-90} /></ScrollBtn></Slot>
        <HTrack>
          <HThumb />
        </HTrack>
        <Slot><ScrollBtn><ArrowUp rot={90} /></ScrollBtn></Slot>
      </HBar>

      <StatusBar>
        <Slot $ml={8}><MacroI /></Slot>
        <TabSpacer />
        <Mode $on $w={38}><NormalI /></Mode>
        <Mode $ml={6} $w={26}><PageI /></Mode>
        <Mode $ml={12} $w={26}><BreakI /></Mode>
        <Slot $ml={8}><S w={6} h={3}><path d="M0 1.5h6" stroke="#666" strokeWidth="2"/></S></Slot>
        <Zoom><ZoomThumb /></Zoom>
        <Slot $ml={7}><S w={8} h={8}><path d="M0 4h8M4 0v8" stroke="#666" strokeWidth="1.6"/></S></Slot>
        <Slot $ml={10}>100%</Slot>
        <Slot $w={7} />
      </StatusBar>
      <Taskbar><TaskItem /></Taskbar>
    </Shell>
  );
}
